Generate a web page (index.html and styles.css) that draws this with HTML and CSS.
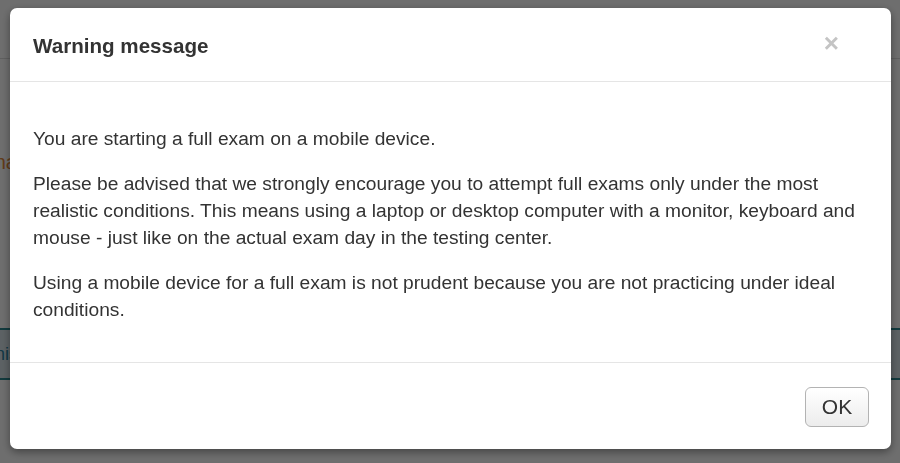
FILE: index.html
```html
<!DOCTYPE html>
<html lang="en">
<head>
  <meta charset="UTF-8" />
  <meta name="viewport" content="width=device-width, initial-scale=1.0" />
  <title>Warning message</title>
  <link rel="stylesheet" href="styles.css">
</head>
<body>
  <div class="page">
    <div class="navbar"></div>
    <p class="page-title">Exam name</p>
    <div class="info-bar">Finish exam</div>
  </div>

  <div class="backdrop">
    <div class="modal">
      <div class="modal-header">
        <h4 class="modal-title">Warning message</h4>
        <button class="close" type="button">&times;</button>
      </div>
      <div class="modal-body">
        <p>You are starting a full exam on a mobile device.</p>
        <p>Please be advised that we strongly encourage you to attempt full exams only under the most realistic conditions. This means using a laptop or desktop computer with a monitor, keyboard and mouse - just like on the actual exam day in the testing center.</p>
        <p>Using a mobile device for a full exam is not prudent because you are not practicing under ideal conditions.</p>
      </div>
      <div class="modal-footer">
        <button class="btn" type="button">OK</button>
      </div>
    </div>
  </div>
</body>
</html>
```

FILE: styles.css
```css
html, body {
  margin: 0;
  height: 100%;
  overflow: hidden;
}
body {
  font-family: "Liberation Sans", Arial, sans-serif;
  background: #fff;
}
.page {
  height: 100%;
}
.navbar {
  height: 58px;
  background: #fff;
  border-bottom: 1px solid #ddd;
}
.page-title {
  margin: 92px 0 0 -62px;
  font-size: 20px;
  color: #e0873a;
}
.info-bar {
  margin-top: 154px;
  height: 48px;
  line-height: 48px;
  margin-left: -20px;
  background: #d6e2e8;
  border-top: 2px solid #2a8790;
  border-bottom: 2px solid #2a8790;
  color: #2b7fa0;
  font-size: 18px;
}
.backdrop {
  position: fixed;
  inset: 0;
  background: rgba(0, 0, 0, 0.57);
  display: flex;
  align-items: flex-start;
  padding: 8px 9px 0 10px;
}
.modal {
  width: 881px;
  height: 441px;
  background: #fff;
  border-radius: 7px;
  box-shadow: 0 3px 8px rgba(0, 0, 0, 0.4);
  display: flex;
  flex-direction: column;
  color: #333;
}
.modal-header {
  height: 73px;
  border-bottom: 1px solid #e5e5e5;
  display: flex;
  align-items: center;
  justify-content: space-between;
  padding: 0 52px 0 23px;
}
.modal-title {
  margin: 2px 0 0;
  font-size: 20.6px;
  font-weight: bold;
  color: #333;
}
.close {
  border: 0;
  background: none;
  padding: 0;
  font-family: "Liberation Sans", Arial, sans-serif;
  font-size: 26px;
  font-weight: bold;
  color: #c4c4c4;
  line-height: 1;
  margin-top: -4px;
}
.modal-body {
  flex: 1;
  padding: 43px 23px 0;
}
.modal-body p {
  margin: 0 0 18px;
  font-size: 19.2px;
  line-height: 27px;
}
.modal-footer {
  height: 86px;
  border-top: 1px solid #e5e5e5;
  display: flex;
  align-items: center;
  justify-content: flex-end;
  padding: 0 22px;
}
.btn {
  width: 64px;
  height: 40px;
  margin-top: 1px;
  border: 1px solid #b3b3b3;
  border-radius: 6px;
  background: linear-gradient(#fff, #ececec);
  font-family: "Liberation Sans", Arial, sans-serif;
  font-size: 21px;
  color: #333;
}
```
